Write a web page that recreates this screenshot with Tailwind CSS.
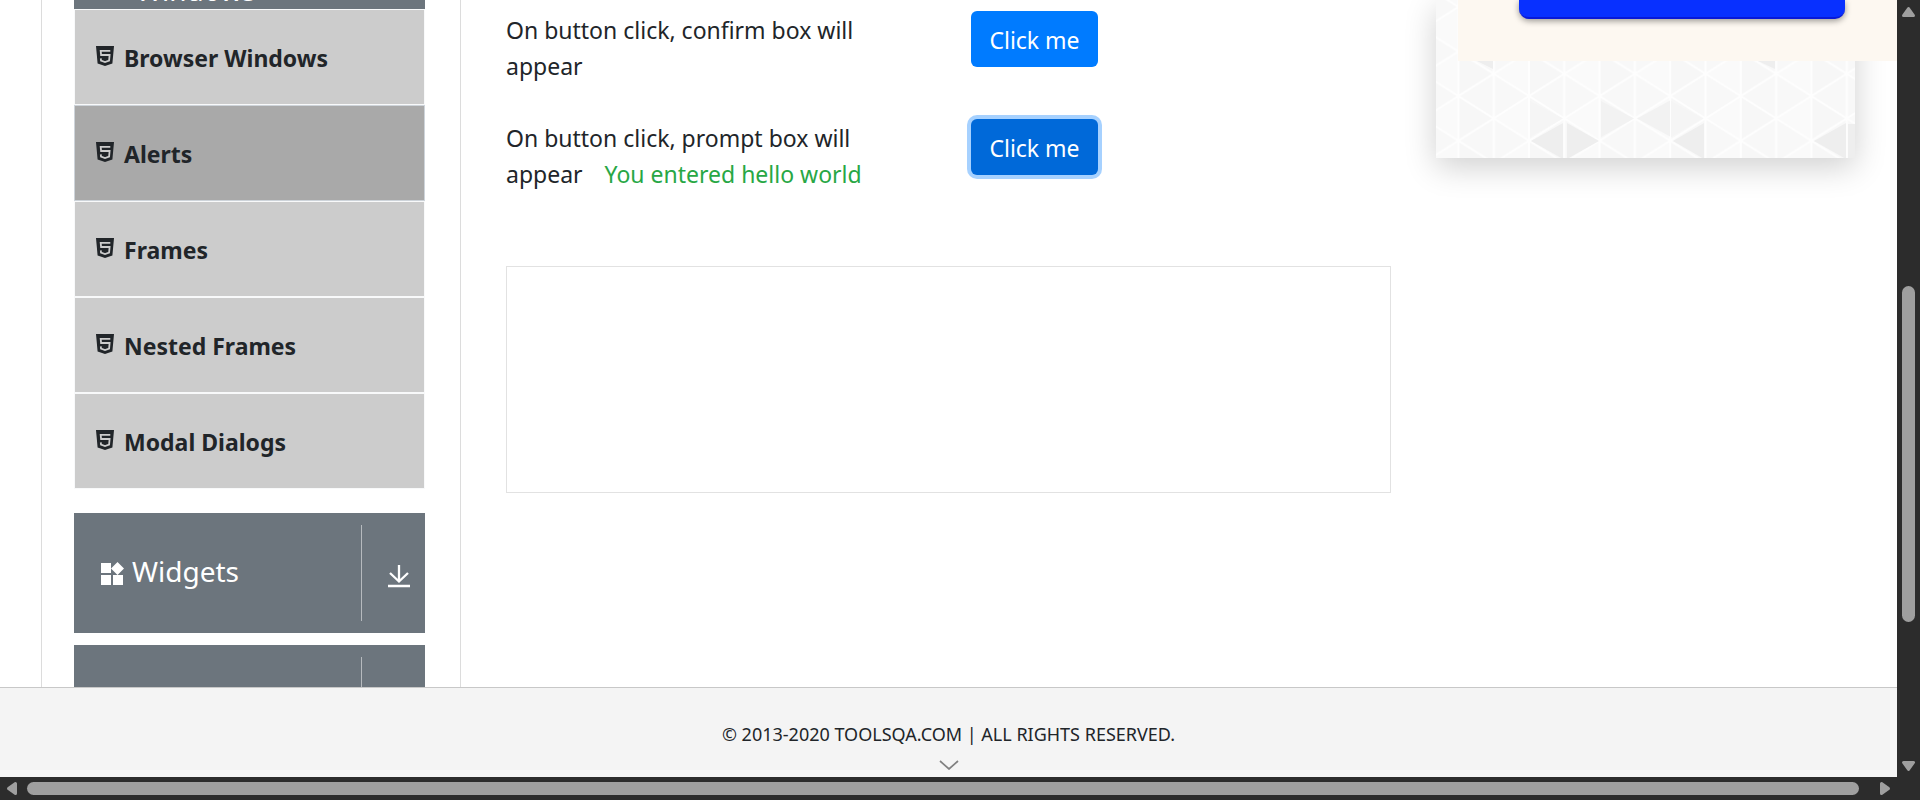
<!DOCTYPE html>
<html lang="en">
<head>
<meta charset="utf-8">
<meta name="viewport" content="width=device-width, initial-scale=1">
<title>Alerts</title>
<script src="https://cdn.jsdelivr.net/npm/@tailwindcss/browser@4"></script>
</head>
<body class="flex h-screen flex-col overflow-hidden bg-white font-['Segoe_UI','Noto_Sans',sans-serif] text-[23px] leading-9 text-[#212529]">
<svg class="hidden" aria-hidden="true">
  <symbol id="html5" viewBox="0 0 18 20">
    <path d="M0 0h18l-1.600 17.400L9 20l-7.400-2.600z" fill="currentColor"/>
    <path d="M14.300 4.800H4.700l.4 4.200h8.500l-.5 5.600L9 16l-4-1.400-.2-2.200" fill="none" stroke="#ccc" stroke-width="1.800"/>
  </symbol>
  <symbol id="download" viewBox="0 0 24 24">
    <path d="M12 1v16M3 9l9 8.500L21 9M1 22h22" fill="none" stroke="currentColor" stroke-width="2.300"/>
  </symbol>
</svg>
<div class="flex min-h-0 flex-1">
  <div class="flex min-w-0 flex-1 flex-col">
    <main class="flex min-h-0 flex-1 overflow-hidden">
      <aside class="ml-[41px] w-[420px] shrink-0 border-x border-[#dcdcdc] pr-[35px] pl-8">
        <div class="flex h-[9px] items-end overflow-hidden bg-[#6c757d] pl-[62px] text-[28px] leading-[38px] text-white"><span>Windows</span></div>
        <ul class="mb-6 font-bold">
          <li><a href="#" class="flex h-24 items-center gap-2.5 border border-[#f8f9fa] bg-[#ccc] pl-[21px]"><svg class="mb-0.5 h-5 w-[18px]"><use href="#html5"/></svg><span class="pt-0.5">Browser Windows</span></a></li>
          <li><a href="#" class="flex h-24 items-center gap-2.5 border border-[#ced4da] bg-[#a9a9a9] pl-[21px]"><svg class="mb-0.5 h-5 w-[18px]"><use href="#html5"/></svg><span class="pt-0.5">Alerts</span></a></li>
          <li><a href="#" class="flex h-24 items-center gap-2.5 border border-[#f8f9fa] bg-[#ccc] pl-[21px]"><svg class="mb-0.5 h-5 w-[18px]"><use href="#html5"/></svg><span class="pt-0.5">Frames</span></a></li>
          <li><a href="#" class="flex h-24 items-center gap-2.5 border border-[#f8f9fa] bg-[#ccc] pl-[21px]"><svg class="mb-0.5 h-5 w-[18px]"><use href="#html5"/></svg><span class="pt-0.5">Nested Frames</span></a></li>
          <li><a href="#" class="flex h-24 items-center gap-2.5 border border-[#f8f9fa] bg-[#ccc] pl-[21px]"><svg class="mb-0.5 h-5 w-[18px]"><use href="#html5"/></svg><span class="pt-0.5">Modal Dialogs</span></a></li>
        </ul>
        <button type="button" class="mb-3 flex h-[120px] w-full items-center bg-[#6c757d] py-3 text-[28px] text-white">
          <svg class="ml-[27px] size-[23px]" viewBox="0 0 23 23" fill="currentColor"><path d="M0 1h10v10H0zM0 13h10v10H0zM12 13h10v10H12zM16.500 0l6.500 6.500-6.500 6.500L10 6.500z"/></svg>
          <span class="mb-1 ml-2 flex-1 text-left">Widgets</span>
          <span class="flex h-24 w-16 items-center border-l border-white/50 pl-[25px]"><svg class="mt-1.5 size-6"><use href="#download"/></svg></span>
        </button>
        <button type="button" aria-label="Interactions" class="flex h-[120px] w-full items-center justify-end bg-[#6c757d] py-3">
          <span class="h-24 w-16 border-l border-white/50"></span>
        </button>
      </aside>
      <section class="min-w-0 flex-1 pl-[45px]">
        <div class="flex pt-[11px]">
          <p class="w-[465px] pt-px pr-[90px]">On button click, confirm box will appear</p>
          <div><button type="button" class="h-14 w-[127px] rounded-md bg-[#007bff] pt-0.5 text-white">Click me</button></div>
        </div>
        <div class="mt-[35px] flex">
          <p class="w-[465px] pt-px pr-[90px]">On button click, prompt box will appear <span class="ml-4 text-[#28a745]">You entered hello world</span></p>
          <div><button type="button" class="h-14 w-[127px] rounded-md bg-[#0069d9] pt-0.5 text-white ring-4 ring-[#007bff]/35">Click me</button></div>
        </div>
        <div class="mt-[74px] h-[227px] border border-[#e2e2e2]"></div>
      </section>
      <aside class="ml-[45px] w-[461px] shrink-0">
        <div class="relative h-[158px] w-[419px] shadow-[0_9px_30px_rgba(0,0,0,0.19)]">
          <svg class="block size-full" viewBox="0 0 419 158">
            <defs>
              <pattern id="mesh" width="70.600" height="44.600" x="22.400" y="51.500" patternUnits="userSpaceOnUse">
                <rect width="71" height="45" fill="#f8f8f8"/>
                <path d="M0 0L35.300 22.300 0 44.600z" fill="#f7f7f7"/>
                <path d="M35.300 22.300L70.600 0v44.600z" fill="#fafafa"/>
                <path d="M0 0v44.600M70.600 0v44.600M35.300 0v44.600M0 0l70.600 44.600M0 44.600L70.600 0" fill="none" stroke="#fefefe" stroke-width="2"/>
              </pattern>
            </defs>
            <rect width="419" height="158" fill="url(#mesh)"/>
            <path d="M235 101l32 17.500-32 18.500zM94 101l33 17.500L94 137z" fill="#f5f5f5"/>
            <path d="M165 101l33 17.500-33 18.500zM201 118.500l33-18v36z" fill="#f2f2f2"/>
            <path d="M95 141l32-18v36zM131 123l32 18-32 18zM237 141l31-18v36zM378 141l32-18v36zM412 124h7v35h-7zM41 61h16v8zM322 61h17v8z" fill="#eeeeee"/>
          </svg>
          <div class="absolute top-0 left-[22px] h-[61px] w-[439px] bg-[#fdf8f1]">
            <button type="button" aria-label="Open advertisement" class="ml-[61px] block h-[19px] w-[326px] rounded-b-[10px] border-b-2 border-[#0818d8] bg-[#0830ff] shadow-[0_2px_6px_rgba(0,0,0,0.4)]"></button>
          </div>
        </div>
      </aside>
    </main>
    <footer class="flex h-[90px] shrink-0 flex-col items-center border-t border-[#c8c8c8] bg-[#f4f4f4] pt-7 text-[18px]">
      <span>© 2013-2020 TOOLSQA.COM | ALL RIGHTS RESERVED.</span>
      <svg class="mt-2 h-[10px] w-5" viewBox="0 0 20 10"><path d="M1 1l9 8 9-8" fill="none" stroke="#808080" stroke-width="1.700"/></svg>
    </footer>
  </div>
  <div class="flex w-[23px] shrink-0 flex-col items-center bg-[#2c2c2c] pt-[6px] pb-[5px]">
    <svg class="h-3 w-[15px]" viewBox="0 0 15 12" fill="#9f9f9f" stroke="#9f9f9f" stroke-width="3" stroke-linejoin="round"><path d="M7.500 2.500l5 7h-10z"/></svg>
    <div class="mt-[268px] h-[336px] w-[13px] rounded-full bg-[#9f9f9f]"></div>
    <svg class="mt-auto h-3 w-[15px]" viewBox="0 0 15 12" fill="#9f9f9f" stroke="#9f9f9f" stroke-width="3" stroke-linejoin="round"><path d="M7.500 9.500l5-7h-10z"/></svg>
  </div>
</div>
<div class="flex h-[23px] shrink-0 items-center bg-[#2c2c2c] pr-[29px] pl-[6px]">
  <svg class="h-[15px] w-3" viewBox="0 0 12 15" fill="#9f9f9f" stroke="#9f9f9f" stroke-width="3" stroke-linejoin="round"><path d="M2.500 7.500l7-5v10z"/></svg>
  <div class="mr-[20px] ml-[9px] h-[13px] flex-1 rounded-full bg-[#9f9f9f]"></div>
  <svg class="h-[15px] w-3" viewBox="0 0 12 15" fill="#9f9f9f" stroke="#9f9f9f" stroke-width="3" stroke-linejoin="round"><path d="M9.500 7.500l-7-5v10z"/></svg>
</div>
</body>
</html>
